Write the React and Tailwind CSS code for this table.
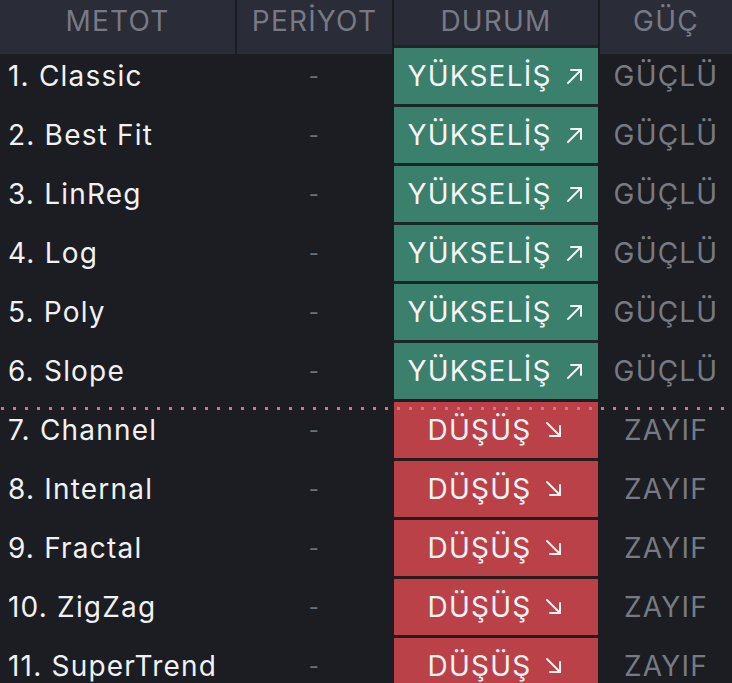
import React from "react";

const rows = [
  { name: "1. Classic", up: true },
  { name: "2. Best Fit", up: true },
  { name: "3. LinReg", up: true },
  { name: "4. Log", up: true },
  { name: "5. Poly", up: true },
  { name: "6. Slope", up: true },
  { name: "7. Channel", up: false, divider: true },
  { name: "8. Internal", up: false },
  { name: "9. Fractal", up: false },
  { name: "10. ZigZag", up: false },
  { name: "11. SuperTrend", up: false },
];

function Arrow({ up }) {
  return (
    <svg width="20" height="20" viewBox="0 0 20 20" fill="none" stroke="currentColor" strokeWidth="2" strokeLinecap="round" strokeLinejoin="round" className="ml-[13px]">
      {up ? (
        <>
          <path d="M3 17 16 4" />
          <path d="M6 4h10v10" />
        </>
      ) : (
        <>
          <path d="M3 3 16 16" />
          <path d="M16 6v10H6" />
        </>
      )}
    </svg>
  );
}

export default function App() {
  return (
    <div
      className="w-[732px] h-[683px] overflow-hidden bg-[#1b1d22] tracking-[1.2px]"
      style={{ fontFamily: "Inter, 'Noto Sans', sans-serif" }}
    >
      {/* header */}
      <div className="grid grid-cols-[235px_155px_204px_1fr] gap-x-[2px] h-[45px] bg-[#1a1c22] border-b border-[#17191e]">
        {["METOT", "PERİYOT", "DURUM", "GÜÇ"].map((h) => (
          <div key={h} className="flex items-center justify-center bg-[#2a2c37] text-[28px] text-[#777a86] pb-[12px]">
            {h}
          </div>
        ))}
      </div>

      {rows.map((r) => (
        <div key={r.name} className="relative grid grid-cols-[235px_155px_204px_1fr] gap-x-[2px] h-[59px]">
          <div className="flex items-center pl-2 pt-[3px] text-[28px] text-[#f1f1f3]">{r.name}</div>
          <div className="flex items-center justify-center pt-[3px] text-[22px] text-[#6d7078]">-</div>
          <div className={r.up ? "pt-[3px] bg-[#1a2825]" : "pt-[3px] bg-[#281a1d]"}>
            <div
              className={
                "h-[56px] flex items-center justify-center text-[28px] text-[#f4f4f4] " +
                (r.up ? "bg-[#3b7f6d]" : "bg-[#bb4148]")
              }
            >
              {r.up ? "YÜKSELİŞ" : "DÜŞÜŞ"}
              <Arrow up={r.up} />
            </div>
          </div>
          <div className="flex items-center justify-center pt-[3px] text-[28px] text-[#777a83]">
            {r.up ? "GÜÇLÜ" : "ZAYIF"}
          </div>
          {r.divider && (
            <div className="absolute left-0 right-0 top-[8px] h-[3px] bg-[repeating-linear-gradient(90deg,transparent_0_1px,#d27491_1px_4px,transparent_4px_12px)]" />
          )}
        </div>
      ))}
    </div>
  );
}
